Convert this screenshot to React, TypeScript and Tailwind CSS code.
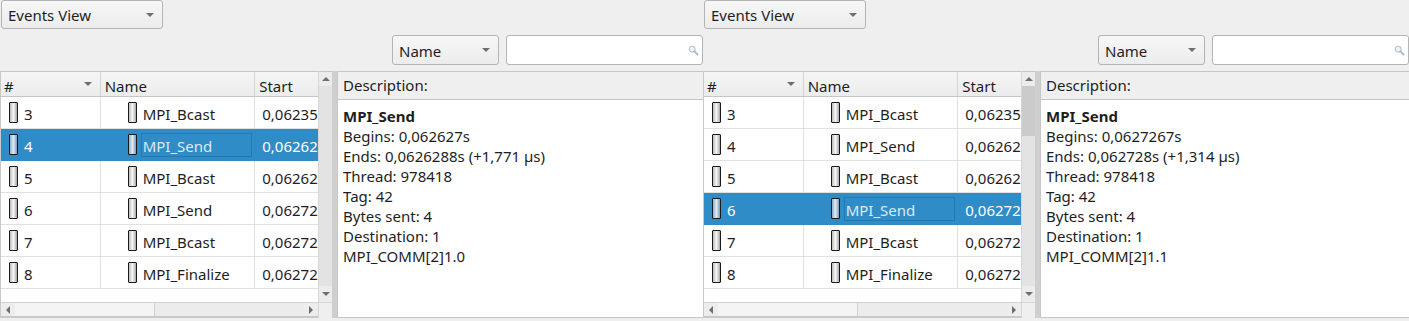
import React from 'react';

type Row = { id: number; name: string; start: string };

const rows: Row[] = [
  { id: 3, name: 'MPI_Bcast', start: '0,06235' },
  { id: 4, name: 'MPI_Send', start: '0,06262' },
  { id: 5, name: 'MPI_Bcast', start: '0,06262' },
  { id: 6, name: 'MPI_Send', start: '0,06272' },
  { id: 7, name: 'MPI_Bcast', start: '0,06272' },
  { id: 8, name: 'MPI_Finalize', start: '0,06272' },
];

function Arrow({ dir, className = '' }: { dir: 'up' | 'down' | 'left' | 'right'; className?: string }) {
  const pts = {
    up: '0,5 4,1 8,5',
    down: '0,1 4,5 8,1',
    left: '5,0 1,4 5,8',
    right: '1,0 5,4 1,8',
  }[dir];
  const size = dir === 'up' || dir === 'down' ? 'w-[8px] h-[6px]' : 'w-[6px] h-[8px]';
  const vb = dir === 'up' || dir === 'down' ? '0 0 8 6' : '0 0 6 8';
  return (
    <svg viewBox={vb} className={`${size} ${className}`}>
      <polygon points={pts} fill="#6e6e6e" />
    </svg>
  );
}

function ItemIcon({ selected }: { selected: boolean }) {
  return (
    <div
      className={`w-[9px] h-[21px] border border-[#1a1a1a] rounded-[1px] shrink-0 ${
        selected
          ? 'bg-gradient-to-r from-[#8fb3d0] via-[#dfe9f2] to-[#7c9cb8]'
          : 'bg-gradient-to-r from-[#bdbdbd] via-[#f7f7f7] to-[#a9a9a9]'
      }`}
    />
  );
}

function Combo({ label, className }: { label: string; className: string }) {
  return (
    <div
      className={`flex items-center justify-between rounded-[3px] border border-[#b4b4b4] bg-gradient-to-b from-[#f7f7f7] to-[#ececec] pl-[6px] pr-[8px] ${className}`}
    >
      <span className="pt-[2px]">{label}</span>
      <Arrow dir="down" />
    </div>
  );
}

function Pane({
  selected,
  desc,
  width,
  thumb,
}: {
  selected: number;
  desc: string[];
  width: string;
  thumb: string;
}) {
  return (
    <div className={`flex flex-col shrink-0 ${width}`}>
      <div className="h-[35px]">
        <Combo label="Events View" className="ml-[1px] h-[29px] w-[162px]" />
      </div>
      <div className="h-[36px] flex justify-end items-start">
        <Combo label="Name" className="h-[30px] w-[107px]" />
        <div className="ml-[7px] h-[30px] flex-1 max-w-[197px] rounded-[3px] border border-[#b4b4b4] bg-white flex items-center justify-end pr-[3px]">
          <svg viewBox="0 0 12 12" className="w-[11px] h-[11px]">
            <circle cx="4.5" cy="4.5" r="3.2" fill="#eef3f8" stroke="#b7c2cc" strokeWidth="1.2" />
            <line x1="7" y1="7" x2="10.5" y2="10.5" stroke="#a9b3bc" strokeWidth="1.8" strokeLinecap="round" />
          </svg>
        </div>
      </div>

      <div className="flex h-[247px]">
        {/* table */}
        <div className="w-[332px] flex border-l border-[#c9c9c9] bg-white">
          <div className="w-[318px] flex flex-col overflow-hidden">
            <div className="h-[26px] flex bg-gradient-to-b from-[#f5f5f5] to-[#ececec] border-t border-b border-[#c6c6c6] shrink-0">
              <div className="w-[100px] flex items-center justify-between px-[3px] pr-[8px] border-r border-[#d4d4d4]">
                <span className="pt-[4px]">#</span>
                <Arrow dir="down" />
              </div>
              <div className="w-[155px] flex items-center px-[4px] border-r border-[#d4d4d4]">
                <span className="pt-[4px]">Name</span>
              </div>
              <div className="w-[63px] flex items-center px-[4px] whitespace-nowrap">
                <span className="pt-[4px]">Start</span>
              </div>
            </div>
            {rows.map((r) => {
              const sel = r.id === selected;
              return (
                <div
                  key={r.id}
                  className={`h-[32px] flex shrink-0 border-b ${
                    sel ? 'bg-[#308cc6] text-white border-[#308cc6]' : 'border-[#e0e0e0]'
                  }`}
                >
                  <div className={`w-[100px] flex items-center pl-[8px] gap-[6px] border-r ${sel ? 'border-[#308cc6]' : 'border-[#e0e0e0]'}`}>
                    <ItemIcon selected={sel} />
                    <span className="pt-[3px]">{r.id}</span>
                  </div>
                  <div className={`w-[155px] flex items-center pl-[27px] gap-[6px] border-r ${sel ? 'border-[#308cc6]' : 'border-[#e0e0e0]'}`}>
                    <ItemIcon selected={sel} />
                    <span
                      className={
                        sel
                          ? 'text-[#dce8f2] border border-[#2878ac] h-[24px] flex items-center w-[111px] -ml-[2px] pl-[1px] pt-[3px]'
                          : 'pt-[3px]'
                      }
                    >
                      {r.name}
                    </span>
                  </div>
                  <div className="w-[63px] flex items-center pl-[7px] pt-[3px] whitespace-nowrap overflow-hidden">{r.start}</div>
                </div>
              );
            })}
            <div className="flex-1" />
            <div className="h-[14px] flex items-center border-t border-[#d2d2d2] bg-[#ededed] shrink-0">
              <div className="w-[14px] flex justify-center">
                <Arrow dir="left" />
              </div>
              <div className="w-[140px] h-full bg-[#f4f4f4] border-r border-[#d0d0d0]" />
              <div className="flex-1 h-full bg-[#ececec]" />
              <div className="w-[14px] flex justify-center">
                <Arrow dir="right" />
              </div>
            </div>
            <div className="h-[2px] bg-[#c9c9c9] shrink-0" />
          </div>
          <div className="w-[14px] flex flex-col border-l border-[#d6d6d6] bg-[#ececec]">
            <div className="h-[15px] flex items-center justify-center border-t border-[#c6c6c6]">
              <Arrow dir="up" />
            </div>
            <div className={`h-[50px] ${thumb}`} />
            <div className="flex-1 bg-[#e3e3e3]" />
            <div className="h-[16px] flex items-center justify-center">
              <Arrow dir="down" />
            </div>
            <div className="h-[16px] bg-[#efefef] border-t border-[#d6d6d6]" />
          </div>
        </div>

        {/* splitter */}
        <div className="w-[5px] bg-[#cfcfcf]" />

        {/* description */}
        <div className="flex-1 flex flex-col border border-[#c6c6c6] border-r-0">
          <div className="h-[28px] flex items-center pl-[5px] bg-[#efefef] border-b border-[#c6c6c6] shrink-0">
            Description:
          </div>
          <div className="flex-1 bg-white pl-[5px] pt-[6px] leading-[20px]">
            {desc.map((line, i) => (
              <div key={i} className={i === 0 ? 'font-bold' : ''}>
                {line}
              </div>
            ))}
          </div>
        </div>
      </div>
    </div>
  );
}

export default function App() {
  return (
    <div
      className="w-[1409px] h-[321px] flex bg-[#efefef] text-[15px] text-[#1e1e1e] overflow-hidden"
      style={{ fontFamily: '"Noto Sans", "Open Sans", sans-serif' }}
    >
      <Pane
        width="w-[703px]"
        selected={4}
        thumb="bg-[#e3e3e3]"
        desc={[
          'MPI_Send',
          'Begins: 0,062627s',
          'Ends: 0,0626288s (+1,771 µs)',
          'Thread: 978418',
          'Tag: 42',
          'Bytes sent: 4',
          'Destination: 1',
          'MPI_COMM[2]1.0',
        ]}
      />
      <Pane
        width="w-[706px]"
        selected={6}
        thumb="bg-[#cbcbcb]"
        desc={[
          'MPI_Send',
          'Begins: 0,0627267s',
          'Ends: 0,062728s (+1,314 µs)',
          'Thread: 978418',
          'Tag: 42',
          'Bytes sent: 4',
          'Destination: 1',
          'MPI_COMM[2]1.1',
        ]}
      />
    </div>
  );
}
